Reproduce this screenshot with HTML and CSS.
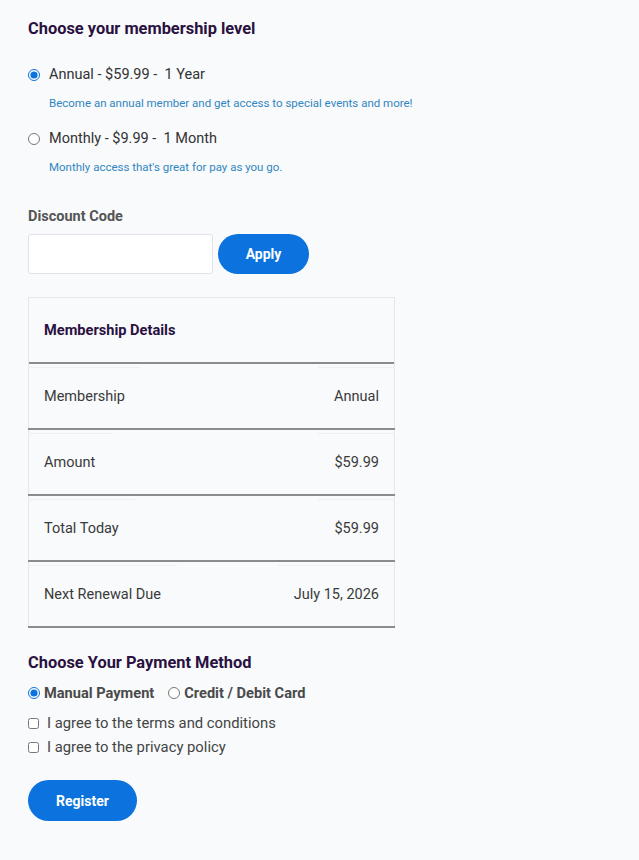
FILE: index.html
```html
<!DOCTYPE html>
<html>
<head>
<meta charset="utf-8">
<link rel="stylesheet" href="styles.css">
</head>
<body>
<div class="page">
  <h2 class="title">Choose your membership level</h2>
  <div class="levels">
    <div class="level">
      <label class="level-label"><input type="radio" name="level" checked> <span>Annual - $59.99 -&nbsp; 1 Year</span></label>
      <div class="level-desc">Become an annual member and get access to special events and more!</div>
    </div>
    <div class="level">
      <label class="level-label"><input type="radio" name="level"> <span>Monthly - $9.99 -&nbsp; 1 Month</span></label>
      <div class="level-desc">Monthly access that's great for pay as you go.</div>
    </div>
  </div>

  <div class="discount">
    <div class="discount-label">Discount Code</div>
    <div class="discount-row">
      <input class="discount-input" type="text">
      <button class="btn btn-apply">Apply</button>
    </div>
  </div>

  <div class="details">
    <div class="details-head">Membership Details</div>
    <div class="details-row"><span class="cell">Membership</span><span class="cell">Annual</span></div>
    <div class="details-row"><span class="cell">Amount</span><span class="cell">$59.99</span></div>
    <div class="details-row"><span class="cell">Total Today</span><span class="cell">$59.99</span></div>
    <div class="details-row"><span class="cell">Next Renewal Due</span><span class="cell">July 15, 2026</span></div>
  </div>

  <h2 class="title pay-title">Choose Your Payment Method</h2>
  <div class="pay-methods">
    <label class="pay"><input type="radio" name="pay" checked>Manual Payment</label>
    <label class="pay"><input type="radio" name="pay">Credit / Debit Card</label>
  </div>
  <div class="agrees">
    <label class="agree"><input type="checkbox">I agree to the terms and conditions</label>
    <label class="agree"><input type="checkbox">I agree to the privacy policy</label>
  </div>
  <button class="btn btn-register">Register</button>
</div>
</body>
</html>
```
FILE: styles.css
```css
html, body {
  margin: 0;
  padding: 0;
  background: #f8fafc;
}
body {
  font-family: Roboto, "Liberation Sans", sans-serif;
  color: #333;
}
.page {
  padding: 19px 28px 30px 28px;
  display: flex;
  flex-direction: column;
  align-items: flex-start;
}
.title {
  margin: 0;
  font-size: 16.4px;
  font-weight: 700;
  color: #2a1140;
  line-height: 20px;
}
.levels {
  margin-top: 26px;
  display: flex;
  flex-direction: column;
  gap: 19px;
}
.level-label {
  display: flex;
  align-items: center;
  gap: 9px;
  font-size: 14.5px;
  color: #333;
  line-height: 20px;
}
input[type="radio"], input[type="checkbox"] {
  margin: 0;
  width: 12px;
  height: 12px;
  accent-color: #0b72de;
}
.level-desc {
  margin-top: 11px;
  margin-left: 21px;
  font-size: 11.5px;
  color: #3286c0;
  line-height: 14px;
}
.discount {
  margin-top: 34px;
}
.discount-label {
  font-size: 14.5px;
  font-weight: 700;
  color: #555;
  line-height: 18px;
}
.discount-row {
  margin-top: 7px;
  display: flex;
  align-items: center;
  gap: 5px;
}
.discount-input {
  width: 185px;
  height: 40px;
  box-sizing: border-box;
  border: 1px solid #dfe3e8;
  border-radius: 3px;
  background: #fff;
  margin: 0;
}
.btn {
  border: none;
  background: #0b72de;
  color: #fff;
  font-family: Roboto, "Liberation Sans", sans-serif;
  font-weight: 700;
  font-size: 14px;
  border-radius: 21px;
  cursor: pointer;
}
.btn-apply {
  width: 91px;
  height: 40px;
  margin-top: 1px;
}
.details {
  margin-top: 23px;
  width: 367px;
  border: 1px solid #e3e8ee;
  border-bottom: none;
  box-sizing: border-box;
}
.details-head {
  height: 64px;
  display: flex;
  align-items: center;
  padding-left: 15px;
  font-size: 14.6px;
  font-weight: 700;
  color: #2a1140;
  border-bottom: 2px solid #8c8c8c;
}
.details-row {
  padding-top: 3px;
  box-sizing: border-box;
  display: flex;
  justify-content: space-between;
  border-bottom: 2px solid #8c8c8c;
  margin-left: -1px;
  margin-right: -1px;
  height: 66px;
}
.cell {
  display: flex;
  align-items: center;
  padding: 0 16px 3px 16px;
  border-top: 1px solid #eceff3;
  font-size: 14.5px;
  color: #3a3a3a;
}
.pay-title {
  margin-top: 25px;
}
.pay-methods {
  margin-top: 11px;
  display: flex;
  gap: 14px;
}
.pay {
  display: flex;
  align-items: center;
  gap: 4px;
  font-size: 14.6px;
  font-weight: 700;
  color: #4a4a4a;
  line-height: 18px;
}
.agrees {
  margin-top: 12px;
  display: flex;
  flex-direction: column;
  gap: 5px;
}
.agree {
  display: flex;
  align-items: center;
  gap: 8px;
  font-size: 14.8px;
  color: #444;
  line-height: 19px;
}
.agree input {
  width: 11px;
  height: 11px;
}
.btn-register {
  margin-top: 23px;
  width: 109px;
  height: 41px;
}
```
